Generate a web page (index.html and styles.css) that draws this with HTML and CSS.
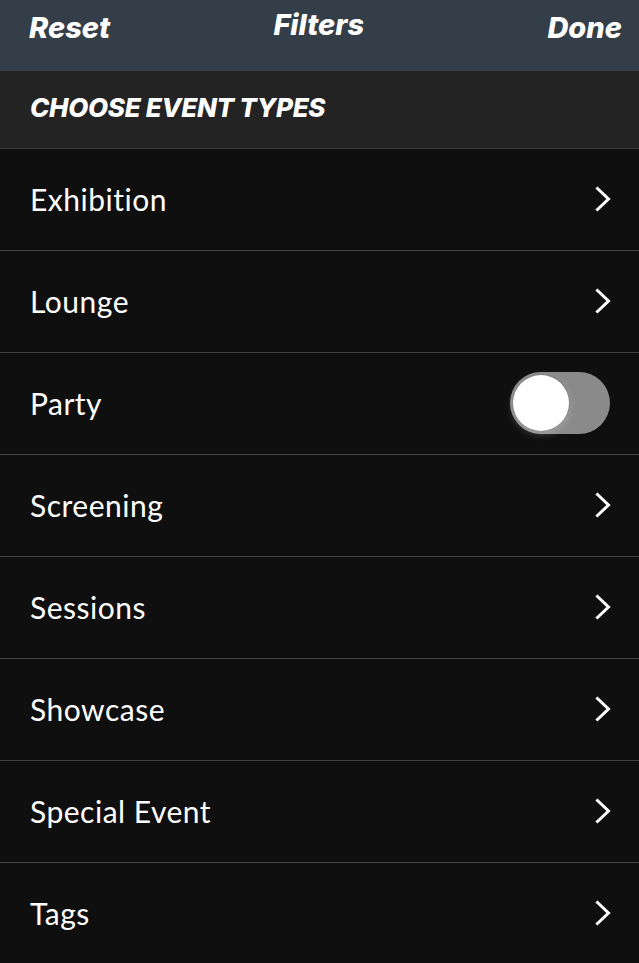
FILE: index.html
```html
<!DOCTYPE html>
<html>
<head>
<meta charset="utf-8">
<link rel="stylesheet" href="styles.css">
</head>
<body>
<header class="navbar">
  <span class="nav-btn">Reset</span>
  <span class="nav-title">Filters</span>
  <span class="nav-btn">Done</span>
</header>
<div class="section">CHOOSE EVENT TYPES</div>
<ul class="list">
  <li class="row"><span class="label">Exhibition</span><svg class="chev" viewBox="0 0 16 26"><path d="M2.5 2.5 L13.5 13 L2.5 23.5"/></svg></li>
  <li class="row"><span class="label">Lounge</span><svg class="chev" viewBox="0 0 16 26"><path d="M2.5 2.5 L13.5 13 L2.5 23.5"/></svg></li>
  <li class="row"><span class="label">Party</span><span class="toggle"><span class="knob"></span></span></li>
  <li class="row"><span class="label">Screening</span><svg class="chev" viewBox="0 0 16 26"><path d="M2.5 2.5 L13.5 13 L2.5 23.5"/></svg></li>
  <li class="row"><span class="label">Sessions</span><svg class="chev" viewBox="0 0 16 26"><path d="M2.5 2.5 L13.5 13 L2.5 23.5"/></svg></li>
  <li class="row"><span class="label">Showcase</span><svg class="chev" viewBox="0 0 16 26"><path d="M2.5 2.5 L13.5 13 L2.5 23.5"/></svg></li>
  <li class="row"><span class="label">Special Event</span><svg class="chev" viewBox="0 0 16 26"><path d="M2.5 2.5 L13.5 13 L2.5 23.5"/></svg></li>
  <li class="row"><span class="label">Tags</span><svg class="chev" viewBox="0 0 16 26"><path d="M2.5 2.5 L13.5 13 L2.5 23.5"/></svg></li>
</ul>
</body>
</html>
```
FILE: styles.css
```css
html, body {
  margin: 0;
  padding: 0;
  background: #0f0f0f;
  height: 100%;
  overflow: hidden;
}
body {
  font-family: "Lato", "Noto Sans", sans-serif;
  color: #fff;
}
.navbar {
  height: 71px;
  background: #343e48;
  display: flex;
  justify-content: space-between;
  align-items: flex-start;
  padding: 0 17px 0 29px;
  box-sizing: border-box;
}
.nav-btn, .nav-title {
  font-family: "Inter", "Open Sans", sans-serif;
  font-weight: 800;
  font-style: italic;
  font-size: 29px;
  letter-spacing: 0;
  line-height: 40px;
}
.nav-btn {
  margin-top: 8px;
}
.nav-title {
  margin-top: 5px;
  margin-right: 20px;
}
.section {
  height: 78px;
  background: #232323;
  border-bottom: 1px solid #3c3c3c;
  box-sizing: border-box;
  display: flex;
  align-items: center;
  padding: 0 0 4px 30px;
  font-family: "Inter", "Open Sans", sans-serif;
  font-weight: 800;
  font-style: italic;
  font-size: 26px;
  letter-spacing: -0.3px;
}
.list {
  list-style: none;
  margin: 0;
  padding: 0;
}
.row {
  height: 102px;
  box-sizing: border-box;
  border-bottom: 1px solid #444;
  display: flex;
  align-items: center;
  justify-content: space-between;
  padding: 0 30px 2px 30px;
}
.label {
  font-size: 30px;
  font-weight: 400;
  letter-spacing: 0.5px;
}
.chev {
  width: 16px;
  height: 26px;
  fill: none;
  stroke: #fff;
  stroke-width: 3;
  stroke-linecap: square;
  margin-right: -2px;
}
.toggle {
  width: 100px;
  height: 62px;
  border-radius: 31px;
  background: #8a8a8a;
  display: flex;
  align-items: center;
  padding-left: 3px;
  box-sizing: border-box;
  margin-right: -1px;
}
.knob {
  width: 56px;
  height: 56px;
  border-radius: 50%;
  background: #fff;
  box-shadow: 0 3px 8px rgba(255,255,255,0.25), 0 0 2px rgba(0,0,0,0.4);
}
```
